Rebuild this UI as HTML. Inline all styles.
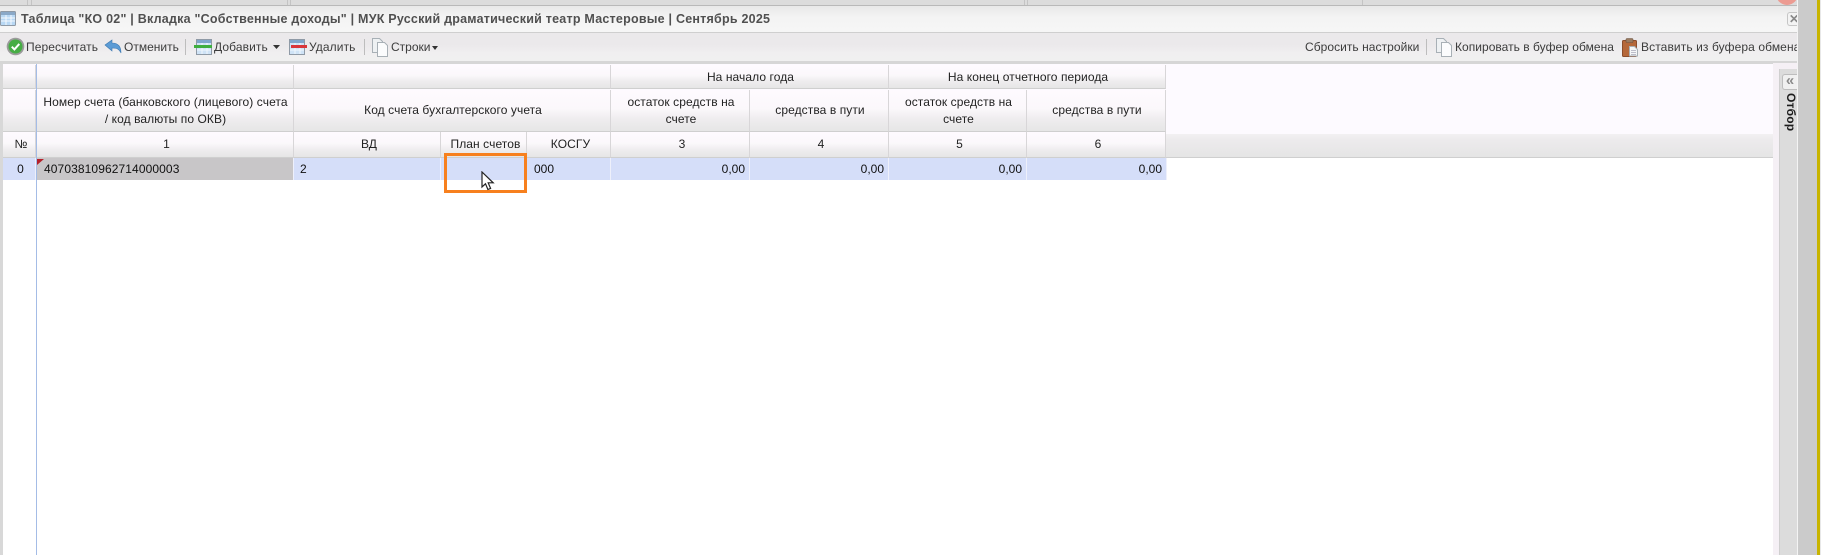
<!DOCTYPE html>
<html lang="ru"><head><meta charset="utf-8"><title>Таблица</title>
<style>
*{box-sizing:border-box}
html,body{margin:0;padding:0;background:#fff}
#p{position:relative;width:1821px;height:555px;overflow:hidden;background:#fff;font-family:"Liberation Sans",sans-serif;font-size:12px;color:#222}
#p div,#p span.a,#p svg{position:absolute}
.t{white-space:nowrap;color:#3c3c3c;font-size:12px;line-height:14px;top:40px}
.sep{width:1px;height:16px;top:39px;background:#bdbdbd}
.h{background:linear-gradient(#fefaff 0,#fbf8fb 45%,#efedef 70%,#e6e6e6 100%);border-right:1px solid #d8d6d8;border-bottom:1px solid #cfcfcf;display:flex;align-items:center;justify-content:center;text-align:center;line-height:17px;color:#222;font-size:12px;padding:0 2px 0 4px;letter-spacing:.08px}
.h1{padding-top:2px}
.h3{padding:0 0 0 4px}
.c{background:#d5def9;border-right:1px solid #eef0fb;line-height:22px;font-size:12px;color:#111;white-space:nowrap;top:158px;height:22px}
.r{text-align:right;padding-right:4px}
</style></head><body><div id="p">

<!-- top strip -->
<div style="left:0;top:0;width:1797px;height:5px;background:#dcdcdc"></div>
<div style="left:27px;top:0;width:1px;height:5px;background:#c4c4c4"></div>
<div style="left:31px;top:0;width:1px;height:5px;background:#c4c4c4"></div>
<div style="left:287px;top:0;width:1px;height:5px;background:#c4c4c4"></div>
<div style="left:290px;top:0;width:1px;height:5px;background:#c4c4c4"></div>
<div style="left:1024px;top:0;width:1px;height:5px;background:#c4c4c4"></div>
<div style="left:1027px;top:0;width:1px;height:5px;background:#c4c4c4"></div>
<div style="left:1362px;top:0;width:1px;height:5px;background:#c4c4c4"></div>
<div style="left:1776px;top:-17px;width:22px;height:22px;border-radius:50%;background:#ec9b92"></div>

<!-- title bar -->
<div style="left:0;top:5px;width:1797px;height:1px;background:#b9b9b9"></div>
<div style="left:0;top:6px;width:1797px;height:26px;background:linear-gradient(#e8e8e8,#f4f4f4 45%,#f6f6f6)"></div>
<div style="left:0;top:32px;width:1797px;height:1px;background:#cfcfcf"></div>
<svg style="left:0;top:11px" width="17" height="15" viewBox="0 0 17 15"><rect x="0.5" y="0.5" width="15" height="14" rx="1" fill="#b8d8f4" stroke="#8f9aa6"/><rect x="1" y="1" width="14" height="3" fill="#8aa9c8"/><path d="M1 7h14M1 10h14M6 4v10M11 4v10" stroke="#f5f9fd" stroke-width="1"/></svg>
<div style="left:21px;top:12px;white-space:nowrap;font-weight:bold;font-size:12.5px;line-height:15px;color:#505050;letter-spacing:.23px">Таблица "КО 02" | Вкладка "Собственные доходы" | МУК Русский драматический театр Мастеровые | Сентябрь 2025</div>
<div style="left:1787px;top:12px;width:11px;height:14px;background:#f3f3f3;border:1px solid #c6c6c6;border-right:0;border-radius:3px 0 0 3px;font-size:12px;font-weight:bold;color:#888;line-height:12px;padding-left:1px;overflow:hidden">✕</div>

<!-- toolbar -->
<div style="left:0;top:33px;width:1797px;height:28px;background:linear-gradient(#ebe9eb,#ebe9eb 12px,#f0eff0 20px,#f0f0f0)"></div>
<div style="left:0;top:61px;width:1797px;height:3px;background:#d6d6d6"></div>

<svg style="left:6px;top:37px" width="19" height="19" viewBox="0 0 19 19"><circle cx="9.5" cy="9.5" r="8.8" fill="#9b9b9b"/><circle cx="9.5" cy="9.5" r="7" fill="#46ad44"/><path d="M5.8 9.7l2.6 2.7 4.9-5.5" fill="none" stroke="#fff" stroke-width="2"/></svg>
<div class="t" style="left:26px;letter-spacing:.1px">Пересчитать</div>
<svg style="left:104px;top:39px" width="18" height="15" viewBox="0 0 18 15"><path d="M1 6L8 1v3c5 0 9 2 9 10-2-4-4-5-9-5v3z" fill="#5b9bd5" stroke="#3c78b0" stroke-width=".6"/></svg>
<div class="t" style="left:124px">Отменить</div>
<div class="sep" style="left:185px"></div>

<svg style="left:194px;top:38px" width="19" height="18" viewBox="0 0 19 18"><rect x="2.5" y="1.5" width="15" height="15" fill="#cfe3f6" stroke="#8f9aa6"/><rect x="3" y="2" width="14" height="3" fill="#7fa6cc"/><path d="M8 5v11M13 5v11M3 12h14" stroke="#f2f7fc"/><rect x="0" y="7" width="18" height="3" fill="#3fae3f"/></svg>
<div class="t" style="left:214px;letter-spacing:.1px">Добавить</div>
<svg style="left:273px;top:45px" width="7" height="4" viewBox="0 0 7 4"><path d="M0 0h7L3.5 4z" fill="#333"/></svg>

<svg style="left:289px;top:38px" width="18" height="18" viewBox="0 0 18 18"><rect x="0.5" y="1.5" width="15" height="15" fill="#cfe3f6" stroke="#8f9aa6"/><rect x="1" y="2" width="14" height="3" fill="#7fa6cc"/><path d="M6 5v11M11 5v11M1 12h14" stroke="#f2f7fc"/><rect x="2" y="7" width="16" height="3" fill="#d9363a"/></svg>
<div class="t" style="left:309px;letter-spacing:.1px">Удалить</div>
<div class="sep" style="left:364px"></div>

<svg style="left:371px;top:38px" width="18" height="19" viewBox="0 0 18 19"><path d="M1.5.5h7l3 3v11h-10z" fill="#eef1f3" stroke="#a8b0b6"/><path d="M6.5 4.5h7l3 3v11h-10z" fill="#fbfcfd" stroke="#a8b0b6"/></svg>
<div class="t" style="left:391px">Строки</div>
<svg style="left:432px;top:46px" width="6" height="4" viewBox="0 0 6 4"><path d="M0 0h6L3 4z" fill="#333"/></svg>

<div class="t" style="left:1305px;letter-spacing:.05px">Сбросить настройки</div>
<div class="sep" style="left:1426px"></div>
<svg style="left:1435px;top:38px" width="18" height="19" viewBox="0 0 18 19"><path d="M1.5.5h7l3 3v11h-10z" fill="#eef1f3" stroke="#a8b0b6"/><path d="M6.5 4.5h7l3 3v11h-10z" fill="#fbfcfd" stroke="#a8b0b6"/></svg>
<div class="t" style="left:1455px;letter-spacing:.03px">Копировать в буфер обмена</div>
<svg style="left:1622px;top:38px" width="17" height="19" viewBox="0 0 17 19"><rect x="0.5" y="2.5" width="14" height="16" rx="1" fill="#b5683a" stroke="#8a4d2c"/><rect x="4" y="0.5" width="7" height="4" rx="1" fill="#9a7a60" stroke="#6d5340" stroke-width=".6"/><path d="M7.5 8.5h5l3 3v6.5h-8z" fill="#f4f6f7" stroke="#a8b0b6"/><path d="M9 12.5h5M9 14.5h5M9 16.5h5" stroke="#aab" stroke-width=".7"/></svg>
<div style="left:1641px;top:33px;width:156px;height:28px;overflow:hidden"><div class="t" style="left:0;top:7px;letter-spacing:.1px">Вставить из буфера обмена</div></div>

<!-- grid header background -->
<div style="left:0;top:64px;width:3px;height:491px;background:#d8d8d8"></div>
<div style="left:3px;top:64px;width:1770px;height:70px;background:#fdfaff"></div>
<div style="left:3px;top:134px;width:1770px;height:24px;background:linear-gradient(#f3f1f3,#eceaec 30%,#e5e5e5);border-bottom:1px solid #cfcfcf"></div>

<!-- header row 1 -->
<div class="h" style="left:3px;top:65px;width:33px;height:24px"></div>
<div class="h" style="left:36px;top:65px;width:258px;height:24px"></div>
<div class="h" style="left:294px;top:65px;width:317px;height:24px"></div>
<div class="h h1" style="left:611px;top:65px;width:278px;height:24px">На начало года</div>
<div class="h h1" style="left:889px;top:65px;width:277px;height:24px">На конец отчетного периода</div>

<!-- header row 2 -->
<div class="h" style="left:3px;top:90px;width:33px;height:42px"></div>
<div class="h" style="left:36px;top:90px;width:258px;height:42px">Номер счета (банковского (лицевого) счета<br>/ код валюты по ОКВ)</div>
<div class="h" style="left:294px;top:90px;width:317px;height:42px">Код счета бухгалтерского учета</div>
<div class="h" style="left:611px;top:90px;width:139px;height:42px;padding:0 11px 0 13px">остаток средств на счете</div>
<div class="h" style="left:750px;top:90px;width:139px;height:42px">средства в пути</div>
<div class="h" style="left:889px;top:90px;width:138px;height:42px;padding:0 11px 0 13px">остаток средств на счете</div>
<div class="h" style="left:1027px;top:90px;width:139px;height:42px">средства в пути</div>

<!-- header row 3 -->
<div class="h h3" style="left:3px;top:132px;width:33px;height:26px">№</div>
<div class="h h3" style="left:36px;top:132px;width:258px;height:26px">1</div>
<div class="h h3" style="left:294px;top:132px;width:147px;height:26px">ВД</div>
<div class="h h3" style="left:441px;top:132px;width:86px;height:26px">План счетов</div>
<div class="h h3" style="left:527px;top:132px;width:84px;height:26px">КОСГУ</div>
<div class="h h3" style="left:611px;top:132px;width:139px;height:26px">3</div>
<div class="h h3" style="left:750px;top:132px;width:139px;height:26px">4</div>
<div class="h h3" style="left:889px;top:132px;width:138px;height:26px">5</div>
<div class="h h3" style="left:1027px;top:132px;width:139px;height:26px">6</div>

<!-- data row -->
<div class="c" style="left:3px;width:33px;text-align:center;padding-left:3px">0</div>
<div class="c" style="left:36px;width:258px;background:#c8c6c8;padding-left:8px;letter-spacing:.1px">40703810962714000003</div>
<div class="c" style="left:294px;width:147px;padding-left:6px">2</div>
<div class="c" style="left:441px;width:86px"></div>
<div class="c" style="left:527px;width:84px;padding-left:7px">000</div>
<div class="c r" style="left:611px;width:139px">0,00</div>
<div class="c r" style="left:750px;width:139px">0,00</div>
<div class="c r" style="left:889px;width:138px">0,00</div>
<div class="c r" style="left:1027px;width:140px">0,00</div>
<svg style="left:37px;top:159px" width="7" height="6" viewBox="0 0 7 6"><path d="M0 0h7L0 6z" fill="#b5202a"/></svg>
<div style="left:36px;top:64px;width:1px;height:491px;background:#a4bce6"></div>

<!-- orange highlight -->
<div style="left:444px;top:153px;width:83px;height:40px;border:3px solid #f7801e"></div>
<svg style="left:481px;top:171px" width="15" height="22" viewBox="0 0 15 22"><path d="M1 1v15l3.5-3.2 2.4 5.7 2.7-1.1-2.4-5.6h5z" fill="#fff" stroke="#222" stroke-width="1.2"/></svg>

<!-- right panel -->
<div style="left:1773px;top:63px;width:6px;height:492px;background:#f5f0f5"></div>
<div style="left:1773px;top:63px;width:24px;height:6px;background:#f5f0f5"></div>
<div style="left:1779px;top:69px;width:18px;height:486px;background:#dcdcdc;border-left:1px solid #cfcfcf"></div>
<div style="left:1782px;top:74px;width:15px;height:16px;background:#f0f0f0;border:1px solid #bdbdbd;border-right:0;border-radius:3px 0 0 3px;font-size:15px;line-height:12px;font-weight:bold;color:#8a8a8a;text-align:center">«</div>
<div style="left:1784px;top:93px;writing-mode:vertical-rl;font-weight:bold;font-size:12px;line-height:13px;color:#1c1c1c;white-space:nowrap;letter-spacing:.2px">Отбор</div>

<!-- window edge -->
<div style="left:1797px;top:0;width:1px;height:555px;background:#f4f4f4"></div>
<div style="left:1798px;top:0;width:19px;height:555px;background:#cbcbcb"></div>
<div style="left:1817px;top:0;width:3px;height:555px;background:#c8b400"></div>
<div style="left:1820px;top:0;width:1px;height:555px;background:#e8e8e8"></div>
</div></body></html>
